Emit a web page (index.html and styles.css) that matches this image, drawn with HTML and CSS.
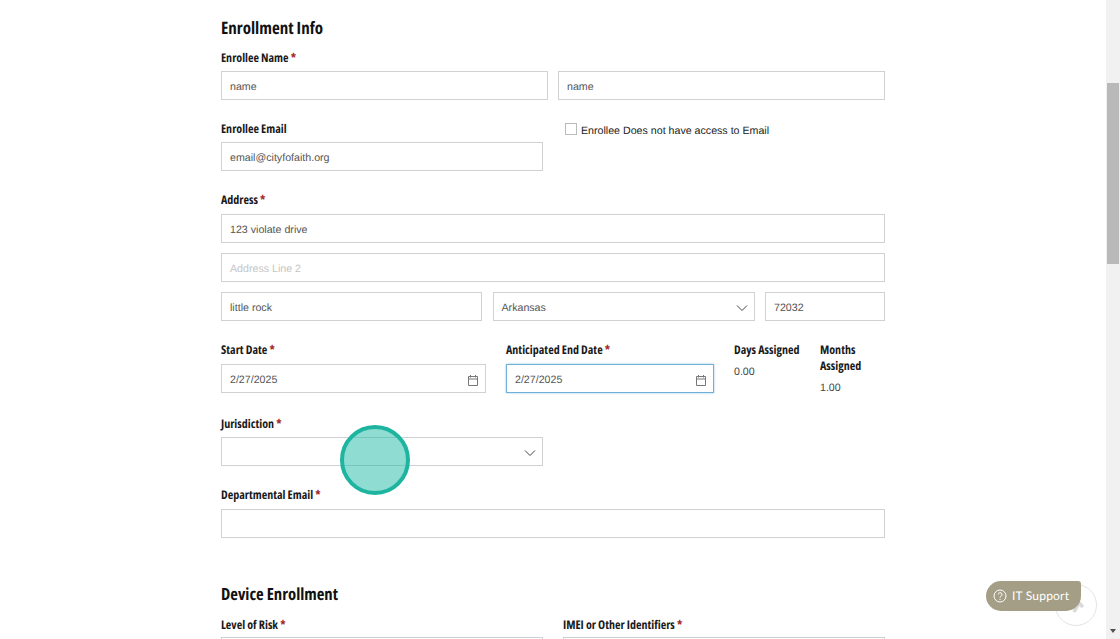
FILE: index.html
```html
<!DOCTYPE html>
<html lang="en">
<head>
<meta charset="utf-8">
<title>Enrollment Info</title>
<link rel="stylesheet" href="styles.css">
</head>
<body>
<div class="page">
  <main class="form">
    <h2 class="heading">Enrollment Info</h2>
    <div class="label">Enrollee Name <span class="req">*</span></div>
    <div class="row row-name">
      <div class="field">name</div>
      <div class="field">name</div>
    </div>
    <div class="row row-email">
      <div>
        <div class="label">Enrollee Email</div>
        <div class="field">email@cityfofaith.org</div>
      </div>
      <label class="check"><span class="box"></span>Enrollee Does not have access to Email</label>
    </div>
    <div class="label label-address">Address <span class="req">*</span></div>
    <div class="field">123 violate drive</div>
    <div class="field placeholder gap-10">Address Line 2</div>
    <div class="row row-city gap-10">
      <div class="field">little rock</div>
      <div class="field select">Arkansas
        <svg class="chev" viewBox="0 0 12 8"><path d="M1 1.5l5 5 5-5"/></svg>
      </div>
      <div class="field">72032</div>
    </div>
    <div class="row row-dates">
      <div>
        <div class="label">Start Date <span class="req">*</span></div>
        <div class="field select">2/27/2025
          <svg class="cal" viewBox="0 0 12 12"><path d="M1.5 2.5h9v9h-9zM1.5 5h9M3.5 1v2.5M8.5 1v2.5"/></svg>
        </div>
      </div>
      <div>
        <div class="label">Anticipated End Date <span class="req">*</span></div>
        <div class="field select focus">2/27/2025
          <svg class="cal" viewBox="0 0 12 12"><path d="M1.5 2.5h9v9h-9zM1.5 5h9M3.5 1v2.5M8.5 1v2.5"/></svg>
        </div>
      </div>
      <div>
        <div class="label">Days Assigned</div>
        <div class="value">0.00</div>
      </div>
      <div>
        <div class="label">Months Assigned</div>
        <div class="value">1.00</div>
      </div>
    </div>
    <div class="label label-jur">Jurisdiction <span class="req">*</span></div>
    <div class="field select half">
      <svg class="chev" viewBox="0 0 12 8"><path d="M1 1.5l5 5 5-5"/></svg>
    </div>
    <div class="label label-dept">Departmental Email <span class="req">*</span></div>
    <div class="field"></div>
    <h2 class="heading heading-device">Device Enrollment</h2>
    <div class="row row-device">
      <div>
        <div class="label">Level of Risk <span class="req">*</span></div>
        <div class="field"></div>
      </div>
      <div>
        <div class="label">IMEI or Other Identifiers <span class="req">*</span></div>
        <div class="field"></div>
      </div>
    </div>
  </main>
  <div class="scrollbar">
    <div class="thumb"></div>
    <svg class="arrow" viewBox="0 0 8 8"><path d="M1 2h6L4 6z"/></svg>
  </div>
  <div class="click-marker"></div>
  <div class="to-top"><svg viewBox="0 0 16 12"><path d="M6 13L11 4l4 4"/></svg></div>
  <div class="support">
    <svg class="help" viewBox="0 0 14 14"><circle cx="7" cy="7" r="6"/><path d="M5.2 5.5a1.9 1.9 0 1 1 2.8 1.7c-.7.4-1 .8-1 1.5"/><path d="M7 10v1"/></svg>
    IT Support
  </div>
</div>
</body>
</html>
```
FILE: styles.css
```css
* { box-sizing: border-box; }
html, body { margin: 0; height: 100%; overflow: hidden; background: #fff; }
.page {
  position: relative;
  display: flex;
  justify-content: space-between;
  height: 639px;
  overflow: hidden;
  font-family: "Liberation Sans", Arial, sans-serif;
  text-rendering: geometricPrecision;
}
.form {
  width: 664px;
  margin-left: 221px;
  padding-top: 16px;
  flex: none;
}
.heading {
  margin: 0 0 10px;
  height: 24px;
  font: 700 17px/24px "Open Sans", sans-serif;
  font-stretch: 75%;
  color: #111;
}
.heading-device { margin: 44px 0 11px; font-size: 16.7px; }
.label {
  margin-bottom: 5px;
  font: 700 12px/16px "Open Sans", sans-serif;
  font-stretch: 75%;
  color: #1a1a1a;
}
.req { color: #a32a2a; }
.field {
  position: relative;
  height: 29px;
  padding: 2px 8px 0;
  border: 1px solid #cfd2d4;
  background: #fff;
  font-size: 10.65px;
  line-height: 26px;
  color: #555;
}
.placeholder { color: #c4c4c4; }
.focus { border-color: #6fb1d6; box-shadow: 0 0 2px #9cc9e2; }
.half { width: 322px; }
.gap-10 { margin-top: 10px; }
.row { display: grid; }
.row-name { grid-template-columns: 327px 327px; column-gap: 10px; }
.row-email { grid-template-columns: 322px 1fr; column-gap: 22px; margin-top: 21px; }
.row-city { grid-template-columns: 261px 262px 120px; column-gap: 10.5px; }
.row-dates { grid-template-columns: 265px 208px 66px 65px; column-gap: 20px; margin-top: 21px; }
.row-dates .label { margin-bottom: 6px; }
.row-device { grid-template-columns: 322px 322px; column-gap: 20px; }
.row-device .label { margin-bottom: 4px; }
.label-address { margin-top: 21px; margin-bottom: 6px; }
.label-jur { margin-top: 21px; }
.label-dept { margin-top: 21px; margin-bottom: 6px; }
.check {
  display: flex;
  align-items: flex-start;
  gap: 4px;
  padding-top: 2px;
  font-size: 10.65px;
  line-height: 16px;
  color: #222;
}
.box { width: 12px; height: 12px; border: 1px solid #bbb; flex: none; }
.value { padding-top: 1px; font-size: 10.65px; line-height: 14px; color: #444; }
.select svg { position: absolute; }
.chev { right: 6px; top: 11px; width: 12px; height: 8px; }
.chev path { fill: none; stroke: #444; stroke-width: 1; }
.cal { right: 6px; top: 9px; width: 12px; height: 12px; }
.cal path { fill: none; stroke: #777; stroke-width: 1; }
.scrollbar {
  position: relative;
  flex: none;
  width: 14px;
  height: 639px;
  background: #f1f1f1;
  padding: 83px 1px 0;
}
.thumb { height: 181px; background: #b9b9b9; }
.arrow { position: absolute; left: 3px; bottom: 4px; width: 8px; height: 8px; }
.arrow path { fill: #505050; }
.click-marker {
  position: absolute;
  left: 340px;
  top: 425px;
  width: 70px;
  height: 70px;
  border-radius: 50%;
  border: 4px solid #1db5a0;
  background: rgba(30, 185, 165, 0.5);
}
.to-top {
  position: absolute;
  left: 1055px;
  top: 584px;
  width: 42px;
  height: 42px;
  border-radius: 50%;
  border: 1px solid #e4e4e4;
  background: #fff;
}
.to-top svg { position: absolute; left: 12px; top: 14px; width: 16px; height: 12px; overflow: visible; }
.to-top path { fill: none; stroke: #d9d9d9; stroke-width: 3.5; }
.support {
  position: absolute;
  left: 986px;
  top: 581px;
  width: 95px;
  height: 30px;
  display: flex;
  align-items: center;
  gap: 5px;
  padding-left: 7px;
  border-radius: 15px 3px 15px 15px;
  background: #a39e85;
  color: #fff;
  font: 400 12px/30px Lato, sans-serif;
  letter-spacing: 0.2px;
}
.help { width: 14px; height: 14px; flex: none; }
.help circle, .help path { fill: none; stroke: #fff; stroke-width: 1; }
```
